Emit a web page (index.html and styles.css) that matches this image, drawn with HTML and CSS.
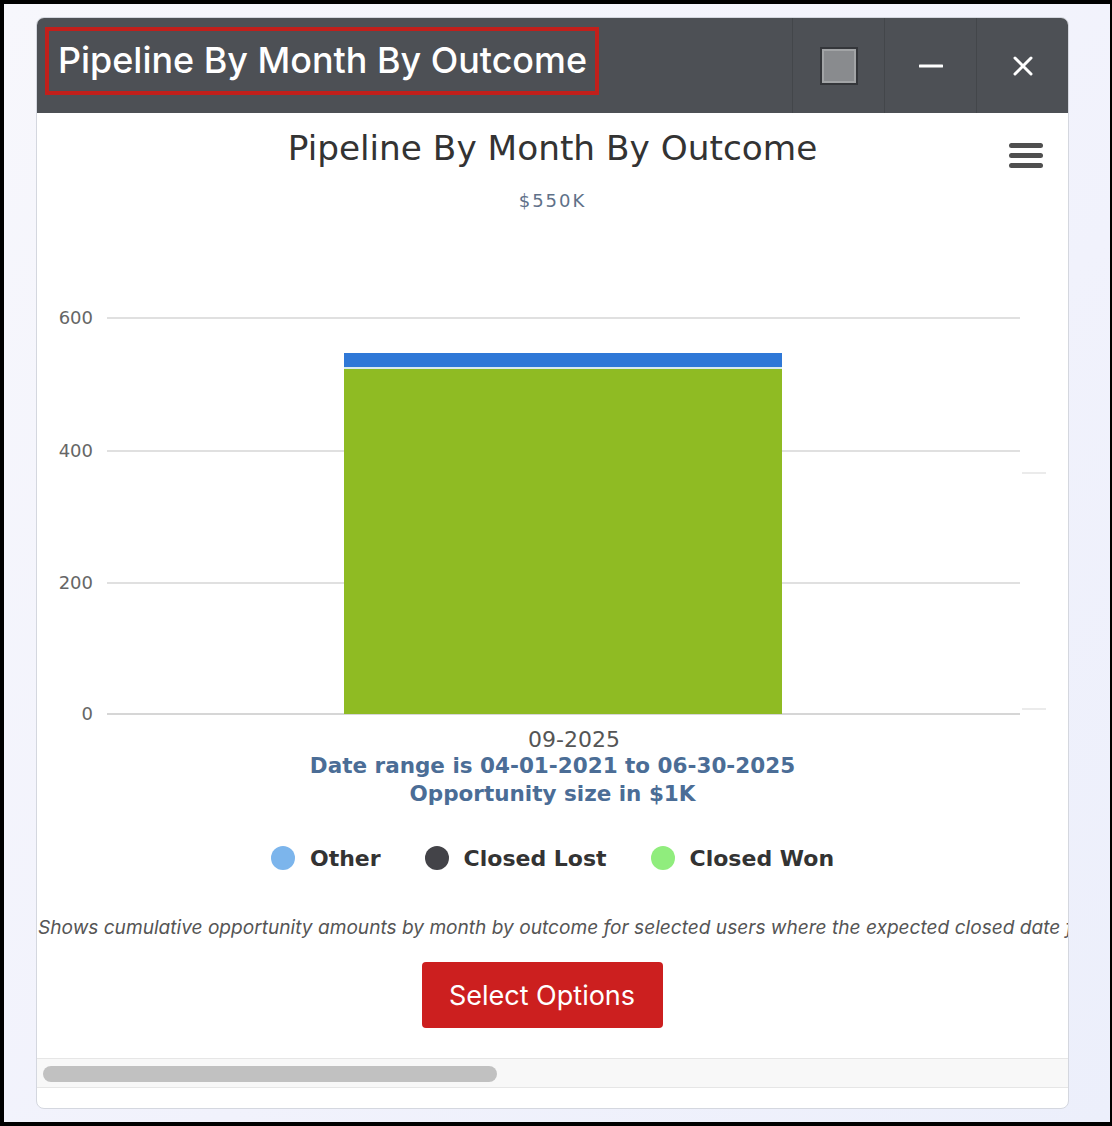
FILE: index.html
```html
<!DOCTYPE html>
<html lang="en">
<head>
<meta charset="utf-8">
<title>Pipeline By Month By Outcome</title>
<link rel="stylesheet" href="styles.css">
</head>
<body>
<div class="screen">
  <div class="panel">
    <div class="panel-header">
      <div class="title-wrap"><h1 class="panel-title">Pipeline By Month By Outcome</h1></div>
      <button class="hbtn" aria-label="Maximize"><span class="sq"></span></button>
      <button class="hbtn" aria-label="Minimize">
        <svg width="24" height="4" viewBox="0 0 24 4"><line x1="1" y1="2" x2="23" y2="2" stroke="#fff" stroke-width="3" stroke-linecap="round"/></svg>
      </button>
      <button class="hbtn" aria-label="Close">
        <svg width="20" height="20" viewBox="0 0 20 20"><path d="M2 2 L18 18 M18 2 L2 18" stroke="#fff" stroke-width="3" stroke-linecap="round"/></svg>
      </button>
    </div>
    <div class="panel-body">
      <div class="chart">
        <div class="chart-title">Pipeline By Month By Outcome</div>
        <div class="menu-icon"><span></span><span></span><span></span></div>
        <div class="chart-sub">$550K</div>
        <svg class="plot" width="1031" height="425" viewBox="0 0 1031 425">
          <g stroke="#e0e0e0" stroke-width="2">
            <line x1="70" y1="18" x2="983" y2="18"/>
            <line x1="70" y1="151" x2="983" y2="151"/>
            <line x1="70" y1="283" x2="983" y2="283"/>
          </g>
          <line x1="70" y1="414" x2="983" y2="414" stroke="#d6d6d6" stroke-width="2"/>
          <g stroke="#e4e4e4" stroke-width="1.5">
            <line x1="985" y1="173" x2="1009" y2="173"/>
            <line x1="985" y1="409" x2="1009" y2="409"/>
          </g>
          <g class="ylab" text-anchor="end">
            <text x="56" y="24">600</text>
            <text x="56" y="157">400</text>
            <text x="56" y="289">200</text>
            <text x="56" y="420">0</text>
          </g>
          <rect x="307" y="53" width="438" height="14" fill="#2f78d7"/>
          <rect x="307" y="67" width="438" height="2" fill="#d9ebf0"/>
          <rect x="307" y="69" width="438" height="345" fill="#8fbb23"/>
        </svg>
        <div class="xlabel">09-2025</div>
        <div class="caption">Date range is 04-01-2021 to 06-30-2025<br>Opportunity size in $1K</div>
        <div class="legend">
          <span class="item"><span class="dot dot-other"></span>Other</span>
          <span class="item"><span class="dot dot-lost"></span>Closed Lost</span>
          <span class="item"><span class="dot dot-won"></span>Closed Won</span>
        </div>
      </div>
      <p class="desc">Shows cumulative opportunity amounts by month by outcome for selected users where the expected closed date falls within the selected date range.</p>
      <div class="actions"><button class="select-btn">Select Options</button></div>
    </div>
    <div class="hscroll"><div class="thumb"></div></div>
    <div class="panel-foot"></div>
  </div>
</div>
</body>
</html>
```

FILE: styles.css
```css
html, body {
  margin: 0;
  padding: 0;
}
body {
  background: #000;
  width: 1112px;
  height: 1126px;
  padding: 4px 2px 4px 4px;
  box-sizing: border-box;
  overflow: hidden;
}
.screen {
  height: 1118px;
  background: linear-gradient(135deg, #f7f7fc 0%, #f1f2fc 60%, #eceffb 100%);
  padding: 13px 0 0 32px;
  box-sizing: border-box;
}
.panel {
  width: 1033px;
  height: 1092px;
  box-sizing: border-box;
  border: 1px solid #d4d7df;
  border-radius: 8px;
  background: #fff;
  overflow: hidden;
  display: flex;
  flex-direction: column;
}
.panel-header {
  flex: none;
  height: 95px;
  background: #4d5055;
  display: flex;
}
.title-wrap {
  flex: 1;
  padding: 9px 0 0 8px;
}
.panel-title {
  margin: 0;
  display: inline-block;
  box-sizing: border-box;
  height: 68px;
  border: 4px solid #c21f1b;
  padding: 0 8px 0 9px;
  font-family: "Inter", "Liberation Sans", sans-serif;
  font-weight: 500;
  font-size: 35.9px;
  line-height: 58px;
  color: #fff;
  white-space: nowrap;
}
.hbtn {
  width: 92px;
  box-sizing: border-box;
  border: none;
  border-left: 1px solid #43464a;
  background: transparent;
  padding: 0;
  display: flex;
  align-items: center;
  justify-content: center;
}
.sq {
  width: 38px;
  height: 38px;
  box-sizing: border-box;
  border: 2px solid #34363a;
  box-shadow: inset 0 0 0 2px #a2a4a6;
  background: #898b8e;
}
.panel-body {
  flex: 1;
  overflow: hidden;
}
.chart {
  position: relative;
  text-align: center;
  font-family: "DejaVu Sans", "Verdana", sans-serif;
}
.chart-title {
  padding-top: 15px;
  font-size: 34.3px;
  line-height: 40px;
  color: #333;
}
.menu-icon {
  position: absolute;
  top: 30px;
  right: 25px;
  width: 34px;
  display: flex;
  flex-direction: column;
  gap: 5px;
}
.menu-icon span {
  display: block;
  height: 5px;
  border-radius: 3px;
  background: #4f4f4f;
}
.chart-sub {
  margin-top: 22px;
  font-size: 18px;
  line-height: 22px;
  letter-spacing: 2px;
  color: #5f7189;
}
.plot {
  display: block;
  margin-top: 88px;
}
.ylab text {
  font-family: "DejaVu Sans", sans-serif;
  font-size: 18px;
  fill: #666;
}
.xlabel {
  margin-top: 3px;
  padding-left: 43px;
  font-size: 22px;
  line-height: 24px;
  color: #555;
}
.caption {
  font-size: 21.5px;
  font-weight: bold;
  line-height: 28px;
  color: #4b6d96;
}
.legend {
  margin-top: 35px;
  height: 30px;
  display: flex;
  justify-content: center;
  align-items: center;
  gap: 44px;
  font-size: 22px;
  font-weight: bold;
  color: #333;
}
.item {
  display: flex;
  align-items: center;
  gap: 15px;
}
.dot {
  width: 24px;
  height: 24px;
  border-radius: 50%;
}
.dot-other { background: #7cb5ec; }
.dot-lost { background: #434348; }
.dot-won { background: #90ed7d; }
.desc {
  margin: 42px 0 0;
  padding-left: 1px;
  font-family: "Inter", "Liberation Sans", sans-serif;
  font-style: italic;
  font-size: 19.1px;
  line-height: 24px;
  color: #555;
  white-space: nowrap;
}
.actions {
  margin-top: 23px;
  padding-right: 21px;
  display: flex;
  justify-content: center;
}
.select-btn {
  width: 241px;
  height: 66px;
  border: none;
  border-radius: 4px;
  background: #cc1f1f;
  color: #fff;
  font-family: "Inter", "Liberation Sans", sans-serif;
  font-size: 27px;
  padding: 0;
}
.hscroll {
  flex: none;
  height: 30px;
  box-sizing: border-box;
  border-top: 1px solid #e6e6e6;
  border-bottom: 1px solid #e6e6e6;
  background: #f8f8f8;
  padding: 7px 6px;
}
.thumb {
  width: 454px;
  height: 16px;
  border-radius: 8px;
  background: #c1c1c1;
}
.panel-foot {
  flex: none;
  height: 20px;
}
```
